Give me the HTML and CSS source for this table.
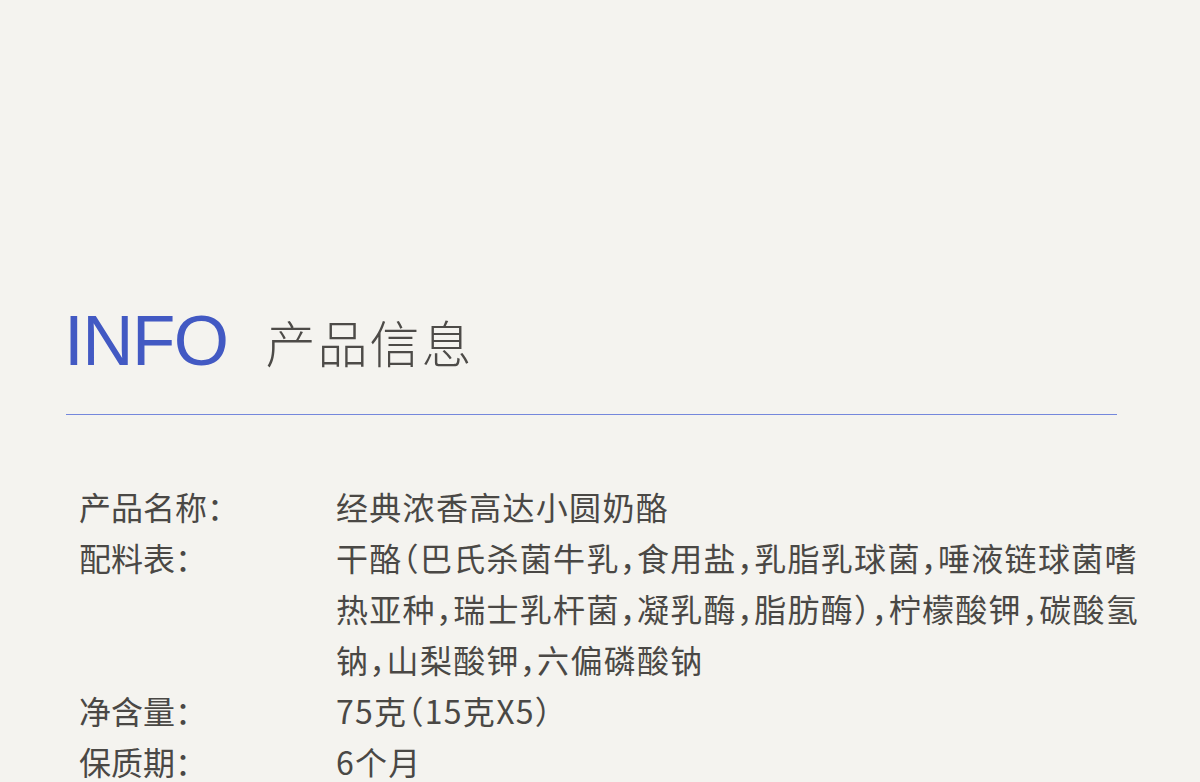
FILE: index.html
```html
<!DOCTYPE html>
<html lang="zh-CN">
<head>
<meta charset="utf-8">
<link rel="stylesheet" href="styles.css">
</head>
<body>
<main class="page">
  <header class="head">
    <h1 class="en">INFO</h1>
    <h2 class="cn">产品信息</h2>
  </header>
  <div class="rule"></div>
  <dl class="info">
    <div class="row"><dt>产品名称：</dt><dd>经典浓香高达小圆奶酪</dd></div>
    <div class="row"><dt>配料表：</dt><dd>干酪（巴氏杀菌牛乳，食用盐，乳脂乳球菌，唾液链球菌嗜热亚种，瑞士乳杆菌，凝乳酶，脂肪酶），柠檬酸钾，碳酸氢钠，山梨酸钾，六偏磷酸钠</dd></div>
    <div class="row"><dt>净含量：</dt><dd>75克（15克X5）</dd></div>
    <div class="row"><dt>保质期：</dt><dd>6个月</dd></div>
  </dl>
</main>
</body>
</html>
```
FILE: styles.css
```css
html, body {
  margin: 0;
  padding: 0;
  background: #f4f3ef;
}
.page {
  width: 1200px;
  padding: 304px 0 0 66px;
  box-sizing: border-box;
}
.head {
  display: flex;
  align-items: center;
  height: 74px;
}
.en {
  margin: 0 0 0 -2px;
  font-family: "Liberation Sans", Arial, sans-serif;
  font-weight: 400;
  font-size: 71px;
  letter-spacing: -1.5px;
  color: #4259c3;
  line-height: 74px;
}
.cn {
  margin: 0 0 0 38px;
  font-family: "Noto Sans CJK SC", sans-serif;
  font-weight: 300;
  font-size: 50px;
  letter-spacing: 2px;
  color: #4d4b48;
  line-height: 74px;
}
.rule {
  margin-top: 36px;
  width: 1051px;
  height: 1px;
  background: #7487dc;
}
.info {
  margin: 66px 0 0 13px;
  font-family: "Noto Sans CJK SC", sans-serif;
  font-size: 32px;
  line-height: 51px;
  color: #4a4845;
  font-feature-settings: "halt";
}
.row {
  display: flex;
}
.info dt {
  width: 257px;
  flex: none;
}
.info dd {
  margin: 0;
  width: 815px;
  letter-spacing: 1.3px;
}
```
